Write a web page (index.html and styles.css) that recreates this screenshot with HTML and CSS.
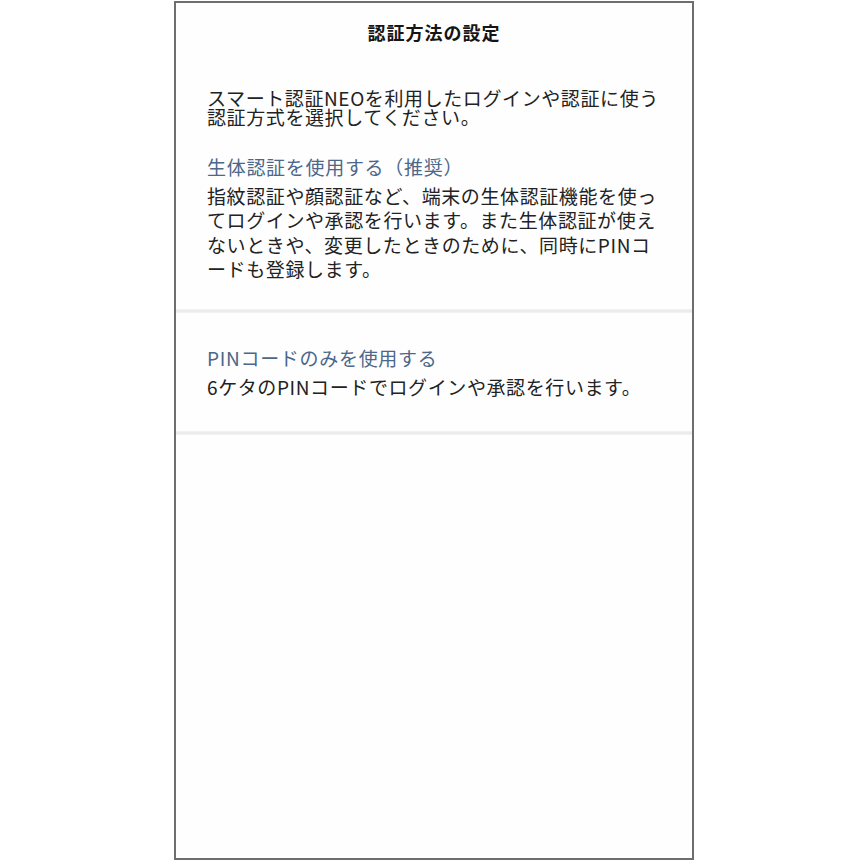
FILE: index.html
```html
<!DOCTYPE html>
<html lang="ja">
<head>
<meta charset="utf-8">
<title>認証方法の設定</title>
<link rel="stylesheet" href="styles.css">
</head>
<body>
<div class="phone">
  <h1 class="title">認証方法の設定</h1>
  <p class="intro">スマート認証NEOを利用したログインや認証に使う<br>認証方式を選択してください。</p>
  <div class="option option-first">
    <div class="option-title">生体認証を使用する（推奨）</div>
    <p class="option-desc">指紋認証や顔認証など、端末の生体認証機能を使っ<br>てログインや承認を行います。また生体認証が使え<br>ないときや、変更したときのために、同時にPINコ<br>ードも登録します。</p>
  </div>
  <div class="divider"></div>
  <div class="option">
    <div class="option-title">PINコードのみを使用する</div>
    <p class="option-desc">6ケタのPINコードでログインや承認を行います。</p>
  </div>
  <div class="divider"></div>
</div>
</body>
</html>
```
FILE: styles.css
```css
html, body {
  margin: 0;
  padding: 0;
  background: #ffffff;
}

body {
  font-family: "Noto Sans CJK JP", "Noto Sans", sans-serif;
  color: #222222;
}

.phone {
  box-sizing: border-box;
  width: 520px;
  height: 859px;
  margin: 1px 0 0 174px;
  border: 2px solid #6e6e6e;
  background: #fefefe;
  display: flex;
  flex-direction: column;
}

.title {
  margin: 17px 0 0;
  font-size: 18px;
  line-height: 24px;
  font-weight: 700;
  text-align: center;
  letter-spacing: 1px;
  color: #151515;
}

.intro {
  margin: 44px 0 0;
  padding-left: 31px;
  font-size: 19px;
  line-height: 19px;
  letter-spacing: 0.6px;
  color: #222222;
}

.option {
  padding: 33px 0 32px 31px;
}

.option-first {
  padding-top: 29px;
  padding-bottom: 28px;
}

.option-title {
  font-size: 19px;
  line-height: 24px;
  letter-spacing: 0.7px;
  color: #4c678a;
}

.option-desc {
  margin: 5px 0 0;
  font-size: 19px;
  line-height: 24.3px;
  letter-spacing: 0.6px;
  color: #222222;
}

.divider {
  height: 4px;
  background: linear-gradient(#f5f5f5, #e8e8e8 50%, #f5f5f5);
}
```
